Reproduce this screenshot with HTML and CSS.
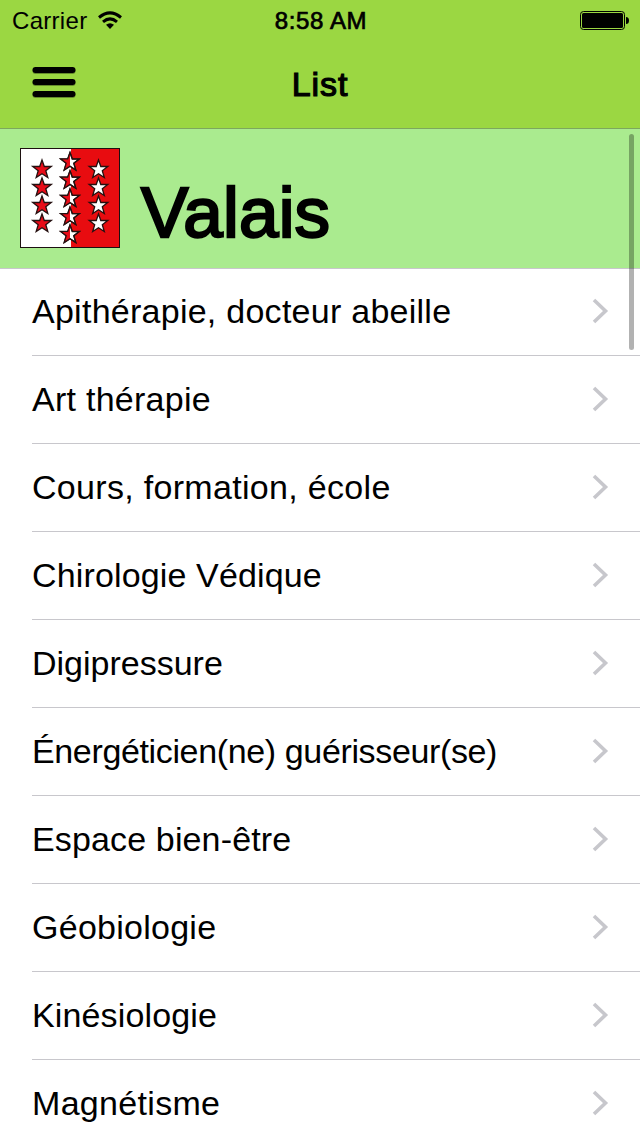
FILE: index.html
```html
<!DOCTYPE html>
<html lang="fr">
<head>
<meta charset="utf-8">
<title>List</title>
<link rel="stylesheet" href="styles.css">
</head>
<body>
<div class="screen">
  <header class="top">
    <div class="status">
      <div class="carrier"><span class="carrier-name">Carrier</span>
        <svg class="wifi" width="26" height="18" viewBox="0 0 26 18"><g fill="none" stroke="#000" stroke-width="3"><path d="M2 6.500Q13-2.800 24 6.500"/><path d="M6 10.800Q13 4.900 20 10.800"/></g><path d="M9 13.800Q13 10.500 17 13.800L13 18Z"/></svg>
      </div>
      <div class="time">8:58 AM</div>
      <svg class="battery" width="50" height="20" viewBox="0 0 50 20"><rect x=".5" y=".5" width="44" height="18" rx="3" fill="none" stroke="#000"/><rect x="2" y="2" width="41" height="15" rx="1.500"/><path d="M46 6q3 0 3 3.500t-3 3.500z"/></svg>
    </div>
    <nav class="navbar">
      <svg class="menu" width="44" height="32" viewBox="0 0 44 32"><g fill="#000" fill-opacity=".35"><rect x=".5" y="1" width="43" height="6" rx="3"/><rect x=".5" y="13" width="43" height="6" rx="3"/><rect x=".5" y="25" width="43" height="6" rx="3"/></g><rect x=".5" width="43" height="6" rx="3"/><rect x=".5" y="12" width="43" height="6" rx="3"/><rect x=".5" y="24" width="43" height="6" rx="3"/></svg>
      <h1 class="title">List</h1>
    </nav>
  </header>
  <section class="region">
    <svg class="flag" width="100" height="100" viewBox="0 0 100 100">
      <defs>
        <path id="star" d="M0-9.500L2.300-3H9.300L3.800 1.300L5.800 8L0 4.200L-5.800 8L-3.800 1.300L-9.300-3H-2.300Z"/>
        <path id="half" d="M0-9.500L-2.300-3H-9.300L-3.800 1.300L-5.800 8L0 4.200Z"/>
      </defs>
      <path fill="#fff" d="M0 0H51V100H0z"/><path fill="#e80c10" d="M51 0H100V100H51z"/>
      <g stroke="#241010" stroke-width="1.300">
        <g fill="#e80c18"><use href="#star" x="22" y="21.500"/><use href="#star" x="22" y="39.500"/><use href="#star" x="22" y="57.500"/><use href="#star" x="22" y="75.500"/></g>
        <g fill="#fff"><use href="#star" x="78.500" y="21.500"/><use href="#star" x="78.500" y="39.500"/><use href="#star" x="78.500" y="57.500"/><use href="#star" x="78.500" y="75.500"/>
        <use href="#star" x="50" y="14"/><use href="#star" x="50" y="32.200"/><use href="#star" x="50" y="50.400"/><use href="#star" x="50" y="68.600"/><use href="#star" x="50" y="86.500"/></g>
      </g>
      <g fill="#e80c18"><use href="#half" x="50" y="14"/><use href="#half" x="50" y="32.200"/><use href="#half" x="50" y="50.400"/><use href="#half" x="50" y="68.600"/><use href="#half" x="50" y="86.500"/></g>
      <g fill="none" stroke="#241010" stroke-width="1.200"><use href="#star" x="50" y="14"/><use href="#star" x="50" y="32.200"/><use href="#star" x="50" y="50.400"/><use href="#star" x="50" y="68.600"/><use href="#star" x="50" y="86.500"/></g>
      <rect x=".5" y=".5" width="99" height="99" fill="none" stroke="#1c1010"/>
    </svg>
    <h2 class="region-name">Valais</h2>
  </section>
  <ul class="list">
    <li class="row"><span class="label loose">Apithérapie, docteur abeille</span><svg class="chevron" width="18" height="28" viewBox="0 0 18 28"><path d="M2 3L13.500 14L2 25"/></svg></li>
    <li class="row"><span class="label loose">Art thérapie</span><svg class="chevron" width="18" height="28" viewBox="0 0 18 28"><path d="M2 3L13.500 14L2 25"/></svg></li>
    <li class="row"><span class="label looser">Cours, formation, école</span><svg class="chevron" width="18" height="28" viewBox="0 0 18 28"><path d="M2 3L13.500 14L2 25"/></svg></li>
    <li class="row"><span class="label slight">Chirologie Védique</span><svg class="chevron" width="18" height="28" viewBox="0 0 18 28"><path d="M2 3L13.500 14L2 25"/></svg></li>
    <li class="row"><span class="label">Digipressure</span><svg class="chevron" width="18" height="28" viewBox="0 0 18 28"><path d="M2 3L13.500 14L2 25"/></svg></li>
    <li class="row"><span class="label tight">Énergéticien(ne) guérisseur(se)</span><svg class="chevron" width="18" height="28" viewBox="0 0 18 28"><path d="M2 3L13.500 14L2 25"/></svg></li>
    <li class="row"><span class="label slight">Espace bien-être</span><svg class="chevron" width="18" height="28" viewBox="0 0 18 28"><path d="M2 3L13.500 14L2 25"/></svg></li>
    <li class="row"><span class="label loose">Géobiologie</span><svg class="chevron" width="18" height="28" viewBox="0 0 18 28"><path d="M2 3L13.500 14L2 25"/></svg></li>
    <li class="row"><span class="label slight">Kinésiologie</span><svg class="chevron" width="18" height="28" viewBox="0 0 18 28"><path d="M2 3L13.500 14L2 25"/></svg></li>
    <li class="row"><span class="label looser">Magnétisme</span><svg class="chevron" width="18" height="28" viewBox="0 0 18 28"><path d="M2 3L13.500 14L2 25"/></svg></li>
  </ul>
  <div class="scrollbar"></div>
</div>
</body>
</html>
```
FILE: styles.css
```css
* { box-sizing: border-box; margin: 0; padding: 0; }
body { background: #fff; color: #000; font-family: "Liberation Sans", Arial, sans-serif; }
svg { display: block; flex: none; }
.screen { position: relative; width: 640px; height: 1136px; overflow: hidden; }
.top { height: 129px; background: #9bd742; border-bottom: 1px solid #7da85d; }
.status { display: grid; grid-template-columns: 1fr auto 1fr; height: 40px; align-items: start; padding: 0 10px 0 12px; }
.carrier { display: flex; gap: 10px; line-height: 42px; font-size: 24px; }
.carrier-name { letter-spacing: 0.3px; }
.wifi { margin-top: 11px; }
.time { font-size: 24px; line-height: 42px; -webkit-text-stroke: 0.7px #000; letter-spacing: 0.6px; }
.battery { justify-self: end; margin-top: 11px; }
.navbar { display: grid; grid-template-columns: 1fr auto 1fr; height: 88px; padding: 0 32px; }
.menu { margin-top: 27px; }
.title { font-size: 34px; font-weight: 400; line-height: 88px; letter-spacing: 0.9px; -webkit-text-stroke: 1.2px #000; }
.region { display: flex; gap: 21px; height: 139px; padding: 19px 20px; background: #aaeb8f; }
.region-name { font-size: 71px; font-weight: 400; line-height: 82px; margin-top: 24px; letter-spacing: 0.2px; -webkit-text-stroke: 2.4px #000; }
.list { list-style: none; border-top: 1px solid #c8c7cc; margin-bottom: -1px; }
.row { display: flex; align-items: center; justify-content: space-between; height: 88px; margin-left: 32px; padding: 0 30px 2px 0; border-bottom: 1px solid #c8c7cc; }
.row:first-child { height: 87px; }
.label { font-size: 34px; line-height: 40px; white-space: nowrap; }
.slight { letter-spacing: 0.14px; }
.loose { letter-spacing: 0.26px; }
.looser { letter-spacing: 0.31px; }
.tight { letter-spacing: -0.36px; }
.chevron { fill: none; stroke: #c7c7cc; stroke-width: 3.6; }
.scrollbar { position: absolute; top: 134px; right: 6px; width: 5px; height: 216px; border-radius: 3px; background: rgba(0, 0, 0, 0.3); }
```
